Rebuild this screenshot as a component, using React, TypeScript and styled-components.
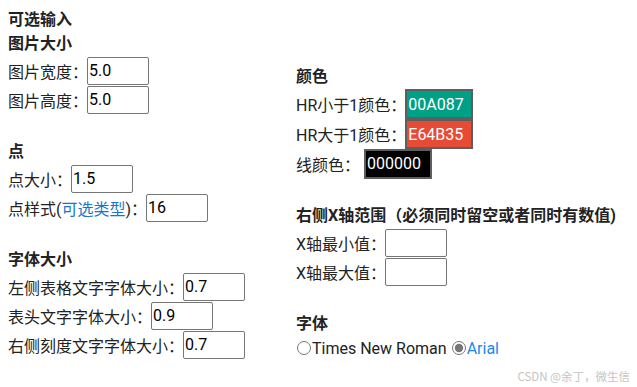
import React, { FC, useState } from "react";
import styled, { createGlobalStyle } from "styled-components";

const GlobalStyle = createGlobalStyle`
    html, body {
        margin: 0;
        padding: 0;
        background: #ffffff;
    }
    body {
        font-family: "Roboto", "Noto Sans CJK SC", sans-serif;
        font-size: 16px;
        color: #222;
    }
`;

const Page = styled.div`
    position: relative;
    width: 637px;
    height: 387px;
    box-sizing: border-box;
    padding: 8px;
    display: flex;
    align-items: flex-start;
`;

const Column = styled.div<{ $width?: number; $top?: number }>`
    width: ${(p) => (p.$width ? `${p.$width}px` : "auto")};
    margin-top: ${(p) => p.$top || 0}px;
    display: flex;
    flex-direction: column;
`;

const Section = styled.div`
    display: flex;
    flex-direction: column;
    margin-bottom: 26px;
`;

const Title = styled.div`
    font-weight: 700;
    height: 24px;
    line-height: 24px;
`;

const Row = styled.div<{ $h?: number }>`
    display: flex;
    align-items: center;
    height: ${(p) => p.$h || 29}px;
`;

const Label = styled.span`
    white-space: nowrap;
`;

const Link = styled.span`
    color: #1a75c9;
`;

const Field = styled.input`
    box-sizing: border-box;
    width: 62px;
    height: 28px;
    margin: 0 0 0 -1px;
    padding: 2px 1px;
    border: 1px solid #767676;
    border-radius: 2px;
    font-family: "Roboto", sans-serif;
    font-size: 16px;
    color: #000;
    background: #fff;
    outline: none;
`;

const ColorField = styled.input<{ $bg: string; $gap?: number }>`
    box-sizing: border-box;
    width: 68px;
    height: 30px;
    margin: 0 0 0 ${(p) => (p.$gap ?? -1)}px;
    padding: 2px 1px;
    border: 2px solid #5e5e5e;
    font-family: "Roboto", sans-serif;
    font-size: 16px;
    color: #fff;
    background: ${(p) => p.$bg};
    outline: none;
`;

const RadioRow = styled.div`
    display: flex;
    align-items: center;
    height: 24px;
`;

const Radio = styled.input`
    margin: 0 1px 0 1px;
    width: 14px;
    height: 14px;
    accent-color: #767676;
`;

const RadioLabel = styled.label<{ $active?: boolean }>`
    color: ${(p) => (p.$active ? "#1e88f0" : "#222")};
    margin-right: 4px;
`;

const Watermark = styled.div`
    position: absolute;
    right: 7px;
    bottom: 3px;
    font-family: "Noto Sans CJK SC", sans-serif;
    font-size: 11.5px;
    color: #c4c4c4;
`;

const App: FC = () => {
  const [font, setFont] = useState<string>("Arial");

  return (
    <>
      <GlobalStyle />
      <Page>
        <Column $width={288}>
          <Section>
            <Title>可选输入</Title>
            <Title>图片大小</Title>
            <Row>
              <Label>图片宽度：</Label>
              <Field defaultValue="5.0" />
            </Row>
            <Row>
              <Label>图片高度：</Label>
              <Field defaultValue="5.0" />
            </Row>
          </Section>
          <Section>
            <Title>点</Title>
            <Row>
              <Label>点大小：</Label>
              <Field defaultValue="1.5" />
            </Row>
            <Row>
              <Label>
                点样式(<Link>可选类型</Link>)：
              </Label>
              <Field defaultValue="16" />
            </Row>
          </Section>
          <Section>
            <Title>字体大小</Title>
            <Row>
              <Label>左侧表格文字字体大小：</Label>
              <Field defaultValue="0.7" />
            </Row>
            <Row>
              <Label>表头文字字体大小：</Label>
              <Field defaultValue="0.9" />
            </Row>
            <Row>
              <Label>右侧刻度文字字体大小：</Label>
              <Field defaultValue="0.7" />
            </Row>
          </Section>
        </Column>
        <Column $top={57}>
          <Section>
            <Title>颜色</Title>
            <Row $h={30}>
              <Label>HR小于1颜色：</Label>
              <ColorField $bg="#00A087" defaultValue="00A087" />
            </Row>
            <Row $h={30}>
              <Label>HR大于1颜色：</Label>
              <ColorField $bg="#E64B35" defaultValue="E64B35" />
            </Row>
            <Row $h={29}>
              <Label>线颜色：</Label>
              <ColorField $bg="#000000" $gap={4} defaultValue="000000" />
            </Row>
          </Section>
          <Section>
            <Title>右侧X轴范围（必须同时留空或者同时有数值)</Title>
            <Row>
              <Label>X轴最小值：</Label>
              <Field />
            </Row>
            <Row>
              <Label>X轴最大值：</Label>
              <Field />
            </Row>
          </Section>
          <Section>
            <Title>字体</Title>
            <RadioRow>
              <Radio
                type="radio"
                name="font"
                checked={font === "Times New Roman"}
                onChange={() => setFont("Times New Roman")}
              />
              <RadioLabel $active={font === "Times New Roman"}>Times New Roman</RadioLabel>
              <Radio
                type="radio"
                name="font"
                checked={font === "Arial"}
                onChange={() => setFont("Arial")}
              />
              <RadioLabel $active={font === "Arial"}>Arial</RadioLabel>
            </RadioRow>
          </Section>
        </Column>
        <Watermark>CSDN @余丁，微生信</Watermark>
      </Page>
    </>
  );
};

export default App;
